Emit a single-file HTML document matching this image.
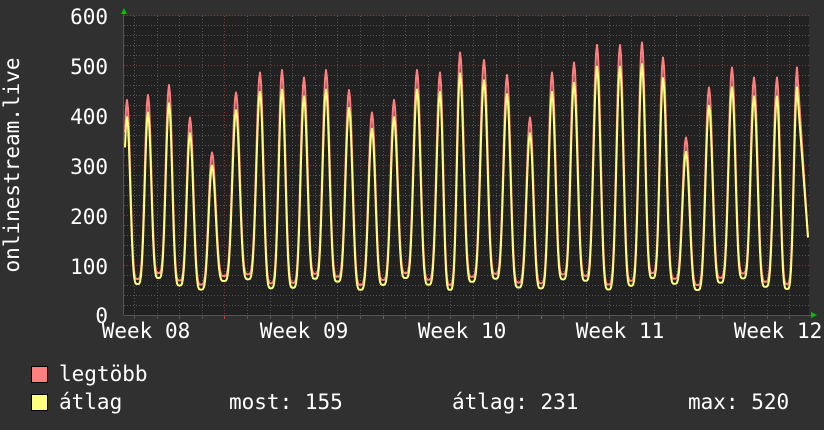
<!DOCTYPE html>
<html><head><meta charset="utf-8"><style>
body{margin:0;background:#303030;width:824px;height:430px;overflow:hidden}
svg{display:block}
text{font-family:"DejaVu Sans Mono","Liberation Mono",monospace;font-size:21px;fill:#fff}
</style></head><body>
<svg id="s" width="824" height="430" xmlns="http://www.w3.org/2000/svg">
<rect x="0" y="0" width="824" height="430" fill="#303030"/>
<rect x="124" y="16" width="685" height="299" fill="#212121"/>
<g id="grid"></g>
<g id="data"></g>
<polygon points="121,14 127,14 124,8" fill="#00c000"/>
<polygon points="811,312 811,318 817,315" fill="#00c000"/>
<text x="108" y="24" text-anchor="end">600</text>
<text x="108" y="74" text-anchor="end">500</text>
<text x="108" y="124" text-anchor="end">400</text>
<text x="108" y="174" text-anchor="end">300</text>
<text x="108" y="224" text-anchor="end">200</text>
<text x="108" y="274" text-anchor="end">100</text>
<text x="108" y="323" text-anchor="end">0</text>
<text x="146" y="338" text-anchor="middle">Week 08</text>
<text x="304" y="338" text-anchor="middle">Week 09</text>
<text x="462" y="338" text-anchor="middle">Week 10</text>
<text x="620" y="338" text-anchor="middle">Week 11</text>
<text x="778" y="338" text-anchor="middle">Week 12</text>
<text transform="translate(19,165) rotate(-90)" text-anchor="middle">onlinestream.live</text>
<rect x="31.5" y="366.5" width="16" height="16" fill="#ff7f7f" stroke="#000"/>
<rect x="31.5" y="394.5" width="16" height="16" fill="#ffff7f" stroke="#000"/>
<text x="59" y="381">legtöbb</text>
<text x="59" y="409">átlag</text>
<text x="229" y="409">most: 155</text>
<text x="452" y="409">átlag: 231</text>
<text x="688" y="409">max: 520</text>
</svg>
<script>
var NS="http://www.w3.org/2000/svg";
var g=document.getElementById('grid'),d=document.getElementById('data');
function ln(x1,y1,x2,y2,c,dash){var l=document.createElementNS(NS,'line');l.setAttribute('x1',x1);l.setAttribute('y1',y1);l.setAttribute('x2',x2);l.setAttribute('y2',y2);l.setAttribute('stroke',c);l.setAttribute('stroke-width',1);if(dash)l.setAttribute('stroke-dasharray',dash);g.appendChild(l);}
for(var v=20;v<=600;v+=20){var y=315.5-v/2;var maj=v%100==0;ln(124,y,809,y,maj?'#7a3a3a':'#555','1,2');}
for(var i=0;i<31;i++){var x=Math.round(134+22.6*i)+0.5;if(x>809)break;var maj=(i%7==4);ln(x,16,x,315,maj?'#7a3a3a':'#555','1,2');ln(x,315,x,319,maj?'#c04040':'#555');}
ln(124,315.5,812,315.5,'#555');ln(123.5,12,123.5,315,'#555');
var px=[127,148,169,190,212,236,260,282,304,326,349,372,394,417,440,460,484,507,530,552,574,597,620,642,663,686,709,732,754,777,797,820];
var pv=[430,440,460,395,325,445,485,490,475,490,450,405,430,490,485,525,510,480,395,485,505,540,540,545,515,355,455,495,475,475,495,300];
function val(x,scale,tr){var k=0;while(k<px.length-2&&x>px[k+1])k++;
 var a=px[k],b=px[k+1];var dist=Math.min(Math.abs(x-a),Math.abs(x-b));var P=b-a;
 var pk=Math.abs(x-a)<Math.abs(x-b)?pv[k]:pv[k+1];
 var f=Math.pow((1+Math.cos(2*Math.PI*dist/P))/2,2.2);
 var trough=tr+12*Math.sin(k*1.7);
 return trough+(pk*scale-trough)*f;}
function poly(scale,tr,c){var p=[];for(var x=125;x<=808;x+=1){var v;
 if(x>797){v=495*scale+(155-495*scale)*(x-797)/11;}else v=val(x,scale,tr);
 p.push(x+','+(315-v/2).toFixed(1));}
 var pl=document.createElementNS(NS,'polyline');pl.setAttribute('points',p.join(' '));pl.setAttribute('fill','none');pl.setAttribute('stroke',c);pl.setAttribute('stroke-width',2);pl.setAttribute('stroke-linejoin','round');d.appendChild(pl);}
poly(1,72,'#ff7f7f');poly(0.92,62,'#ffff7f');
</script>
</body></html>
